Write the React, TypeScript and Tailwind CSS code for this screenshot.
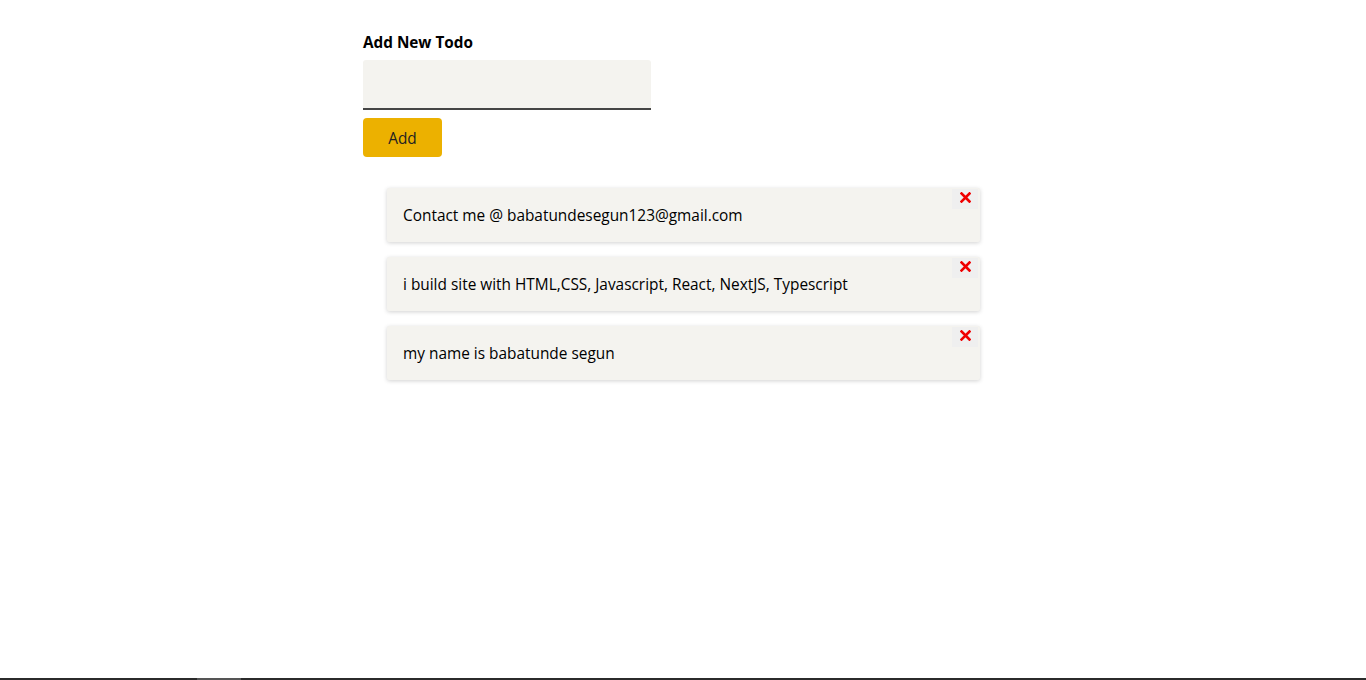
import { useState } from 'react';

export default function App() {
  //state
  const [todos] = useState([
    'Contact me @ babatundesegun123@gmail.com',
    'i build site with HTML,CSS, Javascript, React, NextJS, Typescript',
    'my name is babatunde segun',
  ]);

  //render
  return (
    <div className="h-[680px] flex flex-col bg-white font-['Open_Sans',sans-serif] text-black">
      <main className="flex-grow pl-[363px] pt-[32px]">
        <h4 className="text-[15.3px] font-bold leading-[20px]">Add New Todo</h4>
        <input
          type="text"
          className="mt-[8px] block w-[288px] h-[50px] bg-[#f4f3ef] rounded-t-[3px] border-b-2 border-[#454545] outline-none px-2"
        />
        <button className="mt-[8px] w-[79px] h-[39px] pt-[2px] bg-[#ecb100] rounded-[4px] text-[15.4px] text-[#222]">
          Add
        </button>
        <ul className="mt-[31px] ml-[24px] w-[593px] flex flex-col gap-[15px]">
          {todos.map((todo, i) => (
            <li
              key={i}
              className="relative h-[54px] bg-[#f4f3ef] rounded-[2px] shadow-[0_1px_4px_rgba(0,0,0,0.18)] flex items-center pl-[16px] pt-[1px] text-[15.4px]"
            >
              {todo}
              <button className="absolute top-[1px] right-[2px] w-[26px] h-[20px] bg-[#efefef] flex items-center justify-center">
                <svg width="11" height="11" viewBox="0 0 11 11" className="-mt-[3px]">
                  <path d="M1.5 1.5 L9.5 9.5 M9.5 1.5 L1.5 9.5" stroke="#f00000" strokeWidth="2.6" strokeLinecap="square" />
                </svg>
              </button>
            </li>
          ))}
        </ul>
      </main>
      <div className="h-[2px] bg-[#2b2b2b] flex">
        <div className="ml-[197px] w-[44px] bg-[#555]" />
      </div>
    </div>
  );
}
